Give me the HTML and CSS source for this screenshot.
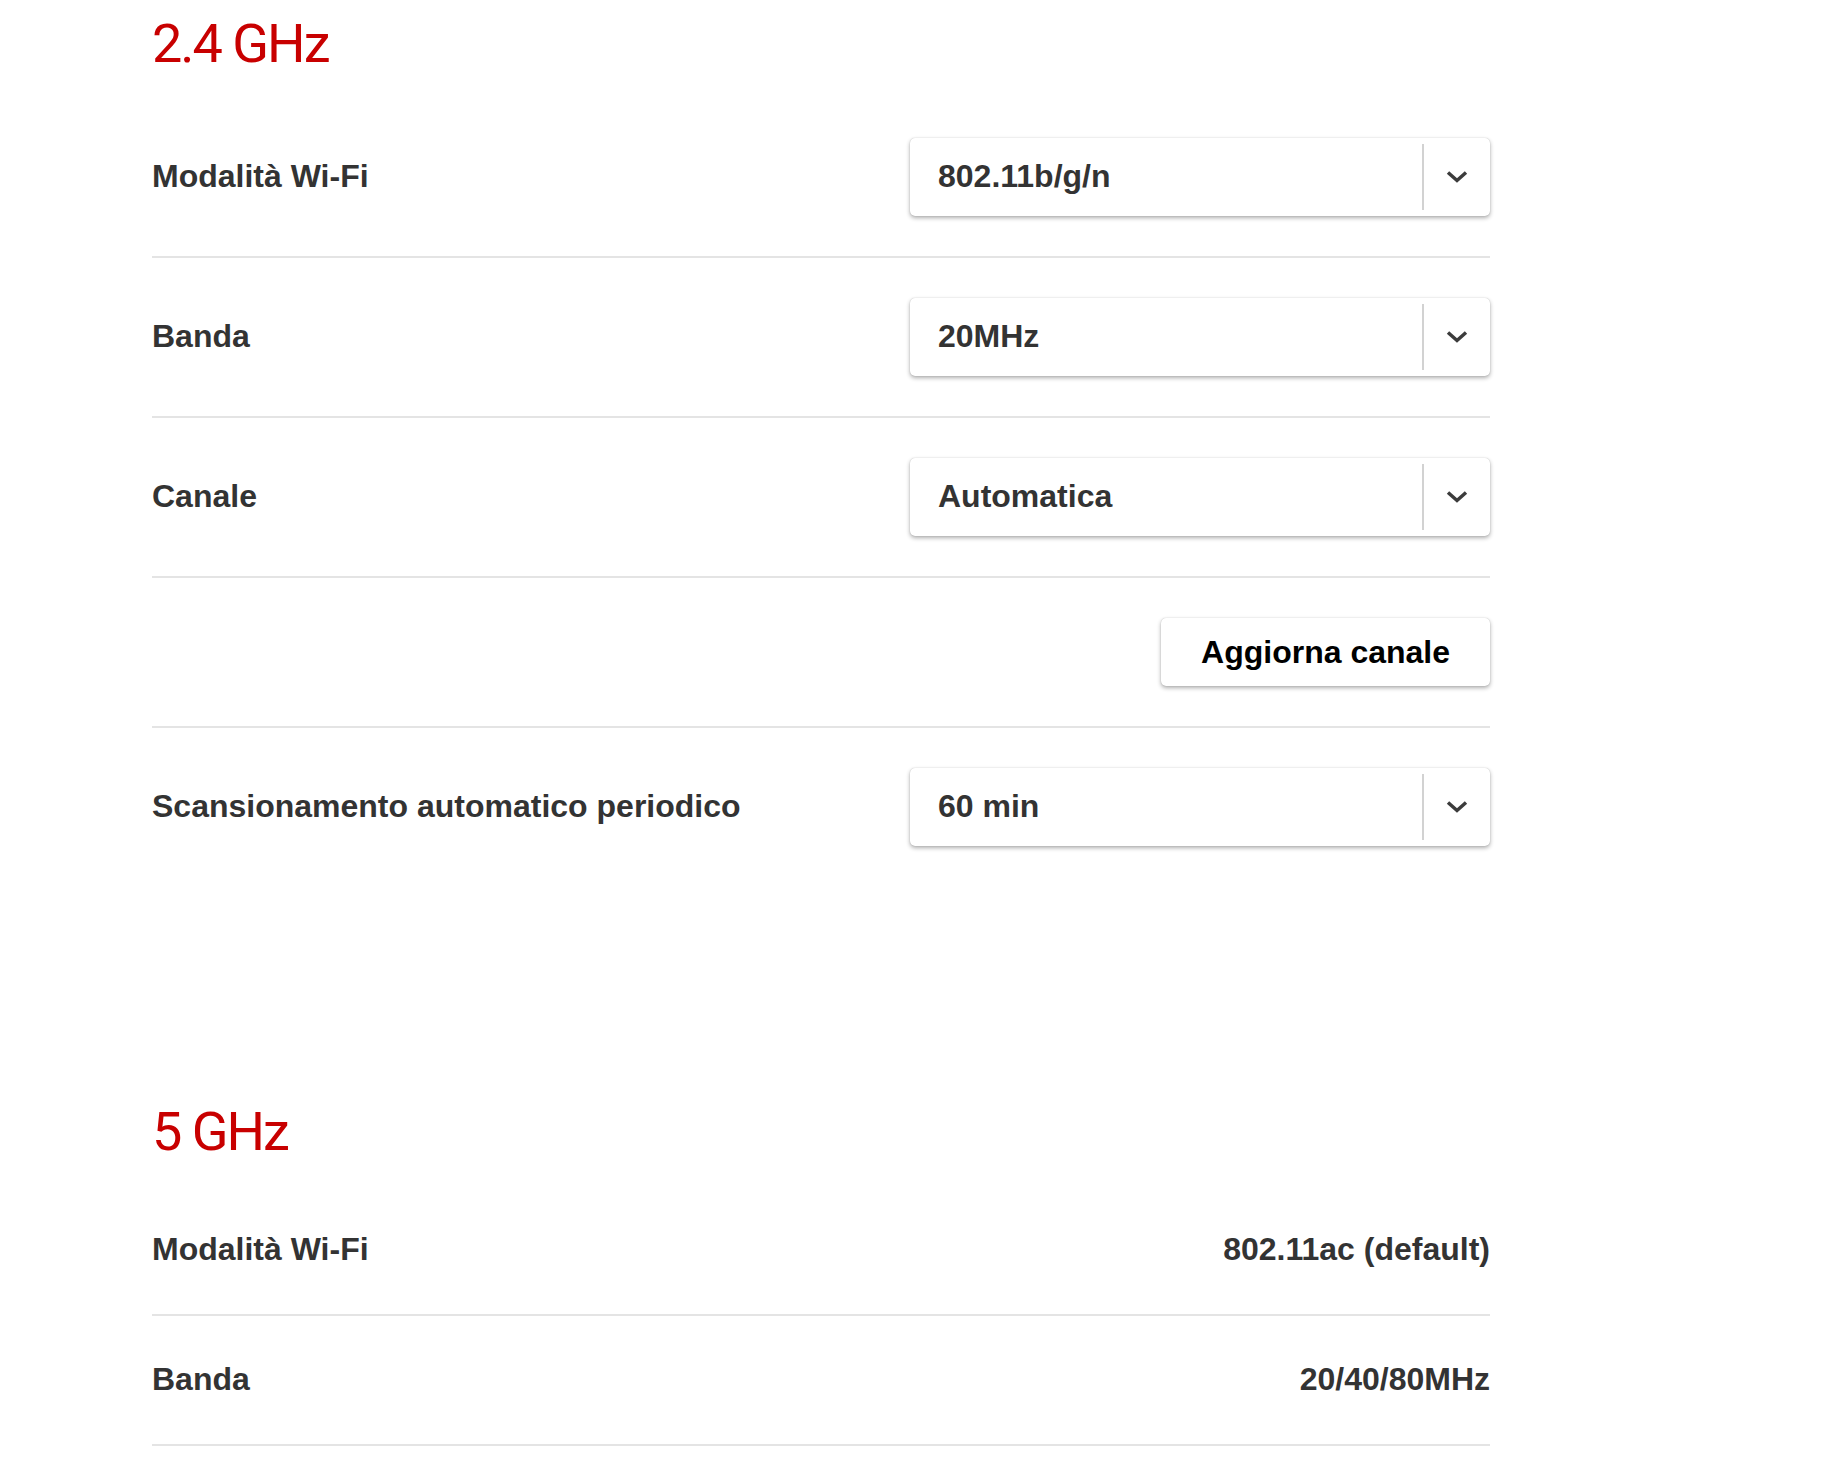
FILE: index.html
```html
<!DOCTYPE html>
<html lang="it">
<head>
  <meta charset="UTF-8">
  <meta name="viewport" content="width=device-width, initial-scale=1.0">
  <title>Wi-Fi</title>
  <link rel="stylesheet" href="styles.css">
</head>
<body>
  <div class="page">
    <section class="band band-24">
      <h2 class="band-title">2.4 GHz</h2>
      <div class="row">
        <span class="row-label">Modalità Wi-Fi</span>
        <div class="select">
          <span class="select-value">802.11b/g/n</span>
          <span class="select-arrow"><svg width="22" height="14" viewBox="0 0 22 14"><path d="M2 2.5 L11 10.5 L20 2.5" fill="none" stroke="#3c3c3c" stroke-width="3.5"/></svg></span>
        </div>
      </div>
      <div class="row">
        <span class="row-label">Banda</span>
        <div class="select">
          <span class="select-value">20MHz</span>
          <span class="select-arrow"><svg width="22" height="14" viewBox="0 0 22 14"><path d="M2 2.5 L11 10.5 L20 2.5" fill="none" stroke="#3c3c3c" stroke-width="3.5"/></svg></span>
        </div>
      </div>
      <div class="row">
        <span class="row-label">Canale</span>
        <div class="select">
          <span class="select-value">Automatica</span>
          <span class="select-arrow"><svg width="22" height="14" viewBox="0 0 22 14"><path d="M2 2.5 L11 10.5 L20 2.5" fill="none" stroke="#3c3c3c" stroke-width="3.5"/></svg></span>
        </div>
      </div>
      <div class="row row-action">
        <button class="btn" type="button">Aggiorna canale</button>
      </div>
      <div class="row">
        <span class="row-label">Scansionamento automatico periodico</span>
        <div class="select">
          <span class="select-value">60 min</span>
          <span class="select-arrow"><svg width="22" height="14" viewBox="0 0 22 14"><path d="M2 2.5 L11 10.5 L20 2.5" fill="none" stroke="#3c3c3c" stroke-width="3.5"/></svg></span>
        </div>
      </div>
    </section>

    <section class="band band-5">
      <h2 class="band-title">5 GHz</h2>
      <div class="row row-text">
        <span class="row-label">Modalità Wi-Fi</span>
        <span class="row-value">802.11ac (default)</span>
      </div>
      <div class="row row-text">
        <span class="row-label">Banda</span>
        <span class="row-value">20/40/80MHz</span>
      </div>
    </section>
  </div>
</body>
</html>
```

FILE: styles.css
```css
body {
  margin: 0;
  padding: 0;
  background: #fff;
  color: #333;
  font-family: 'Liberation Sans', Arial, Helvetica, sans-serif;
  font-size: 32px;
  line-height: 38px;
}
.page {
  width: 1338px;
  margin-left: 152px;
}
.band-title {
  margin: 12px 0 22px;
  font-family: Roboto, 'Liberation Sans', sans-serif;
  font-weight: normal;
  font-size: 54px;
  line-height: 64px;
  letter-spacing: -2px;
  color: #c80000;
}
.band-5 {
  margin-top: 214px;
}
.row {
  display: flex;
  justify-content: space-between;
  align-items: center;
  padding: 40px 0;
  border-bottom: 2px solid #e4e4e4;
}
.band-24 .row:last-child {
  border-bottom: none;
}
.row-action {
  justify-content: flex-end;
}
.row-text {
  padding: 44px 0 46px;
}
.row-label,
.row-value {
  font-weight: bold;
  color: #333;
}
.band-24 .row-label {
  margin-top: -2px;
}
.select {
  display: flex;
  width: 580px;
  height: 78px;
  background: #fff;
  border-radius: 5px;
  box-shadow: 0 2px 4px rgba(0, 0, 0, 0.32), 0 0 1px rgba(0, 0, 0, 0.25);
}
.select-value {
  flex: 1;
  align-self: center;
  margin-top: -2px;
  padding-left: 28px;
  font-weight: bold;
  color: #333;
}
.select-arrow {
  display: flex;
  align-items: center;
  justify-content: center;
  width: 66px;
  margin: 6px 0;
  border-left: 2px solid #d2d2d2;
}
.btn {
  height: 68px;
  padding: 0 40px;
  background: #fff;
  border: none;
  border-radius: 5px;
  box-shadow: 0 2px 4px rgba(0, 0, 0, 0.32), 0 0 1px rgba(0, 0, 0, 0.25);
  font-family: inherit;
  font-size: 32px;
  font-weight: bold;
  color: #000;
  cursor: pointer;
}
```
